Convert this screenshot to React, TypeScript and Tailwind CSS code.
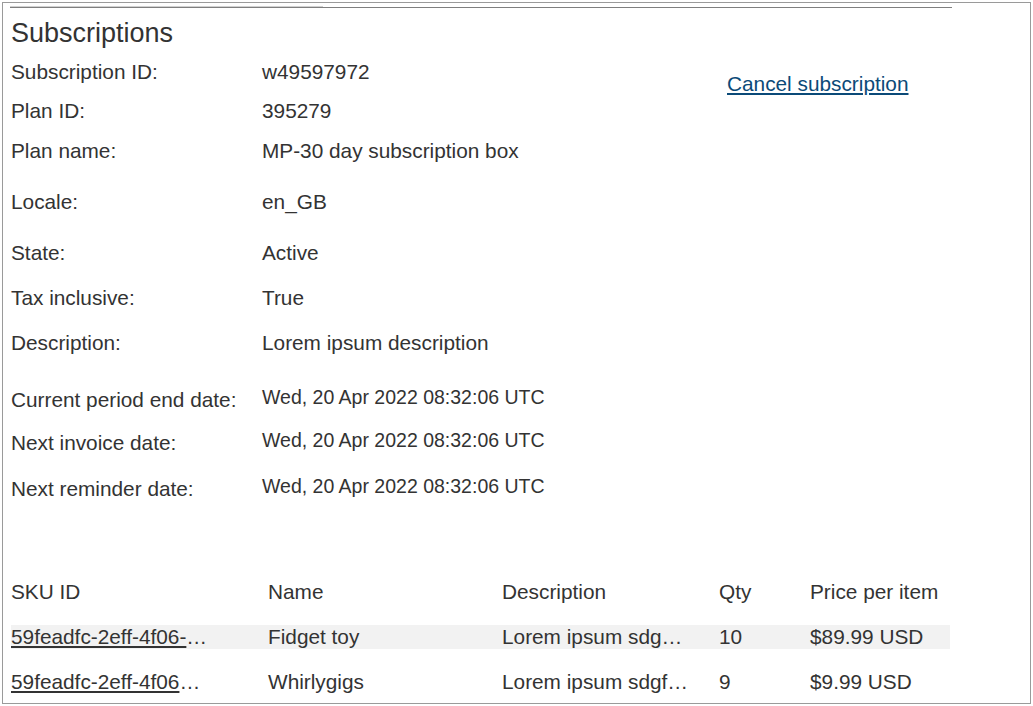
import React from 'react';

type Detail = { label: string; value: string; gap: string; date?: boolean };

const details: Detail[] = [
  { label: 'Subscription ID:', value: 'w49597972', gap: 'mt-0' },
  { label: 'Plan ID:', value: '395279', gap: 'mt-[15px]' },
  { label: 'Plan name:', value: 'MP-30 day subscription box', gap: 'mt-[16px]' },
  { label: 'Locale:', value: 'en_GB', gap: 'mt-[27px]' },
  { label: 'State:', value: 'Active', gap: 'mt-[27px]' },
  { label: 'Tax inclusive:', value: 'True', gap: 'mt-[21px]' },
  { label: 'Description:', value: 'Lorem ipsum description', gap: 'mt-[21px]' },
  { label: 'Current period end date:', value: 'Wed, 20 Apr 2022 08:32:06 UTC', gap: 'mt-[33px]', date: true },
  { label: 'Next invoice date:', value: 'Wed, 20 Apr 2022 08:32:06 UTC', gap: 'mt-[19px]', date: true },
  { label: 'Next reminder date:', value: 'Wed, 20 Apr 2022 08:32:06 UTC', gap: 'mt-[22px]', date: true },
];

const items = [
  {
    sku: '59feadfc-2eff-4f06-9c3e-7b1d2a8f4e60',
    name: 'Fidget toy',
    description: 'Lorem ipsum sdgmsdfg sdfg',
    qty: '10',
    price: '$89.99 USD',
  },
  {
    sku: '59feadfc-2eff-4f06a1b2-3c4d-8e9f0a1b2c3d',
    name: 'Whirlygigs',
    description: 'Lorem ipsum sdgfmsdfg',
    qty: '9',
    price: '$9.99 USD',
  },
];

const cols = 'grid grid-cols-[257px_234px_217px_91px_140px] h-[24px] leading-[24px] text-[20.8px]';

export default function App() {
  return (
    <div className="w-[1033px] h-[706px] bg-white pt-[2px] pl-[2px] font-['Liberation_Sans',Arial,sans-serif] text-[#333]">
      <div className="w-[1029px] h-[702px] border border-[#9a9a9a] overflow-hidden pl-[8px]">
        <div className="mt-[3px] -ml-px w-[942px]">
          <div className="h-px w-[313px] bg-[#d0d0d0]" />
          <div className="h-px bg-[#7f7f7f]" />
        </div>

        <h1 className="mt-[9px] text-[27px] leading-[32px]">Subscriptions</h1>

        <div className="flex mt-[11px]">
          <div className="w-[716px]">
            {details.map(d => (
              <div key={d.label} className={`flex items-start ${d.gap}`}>
                <div className="w-[251px] h-[24px] text-[20.8px] leading-[24px]">{d.label}</div>
                {d.date ? (
                  <div className="text-[19.5px] leading-[19px]">{d.value}</div>
                ) : (
                  <div className="text-[20.8px] leading-[24px]">{d.value}</div>
                )}
              </div>
            ))}
          </div>
          <div className="pt-[12px]">
            <a href="#" className="text-[20.8px] leading-[24px] text-[#0b4a78] underline">
              Cancel subscription
            </a>
          </div>
        </div>

        <div className="mt-[79px] w-[939px]">
          <div className={cols}>
            <div>SKU ID</div>
            <div>Name</div>
            <div>Description</div>
            <div>Qty</div>
            <div>Price per item</div>
          </div>
          {items.map((item, i) => (
            <div key={item.sku} className={`${cols} mt-[21px] ${i === 0 ? 'bg-[#f2f2f2]' : ''}`}>
              <div>
                <a href="#" className="block max-w-[199px] truncate underline text-[#333]">
                  {item.sku}
                </a>
              </div>
              <div>{item.name}</div>
              <div className="max-w-[191px] truncate">{item.description}</div>
              <div>{item.qty}</div>
              <div>{item.price}</div>
            </div>
          ))}
        </div>
      </div>
    </div>
  );
}
